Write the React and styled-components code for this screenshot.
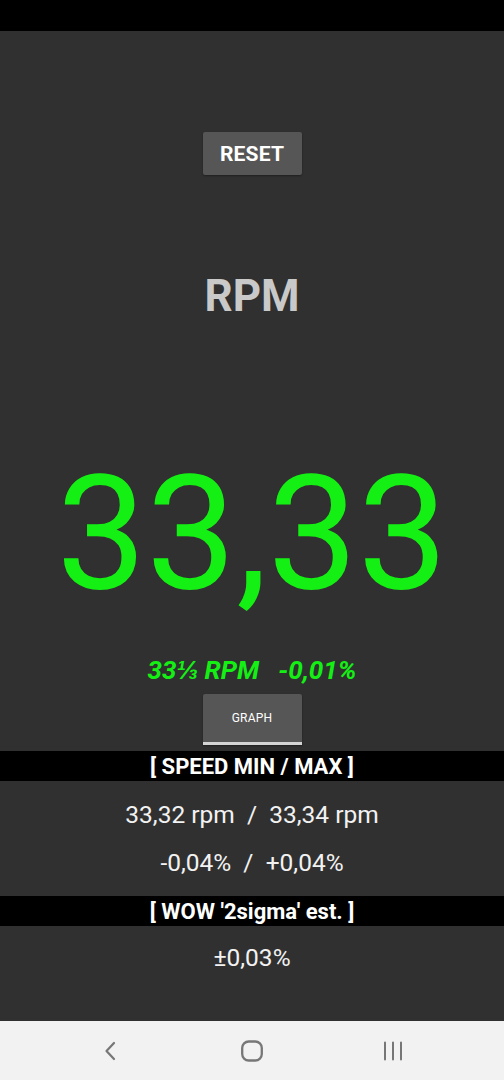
import React from "react";
import styled, { createGlobalStyle } from "styled-components";

const GlobalStyle = createGlobalStyle`
  html, body {
    margin: 0;
    padding: 0;
    background: #303030;
  }
  body {
    font-family: Roboto, "Liberation Sans", sans-serif;
  }
`;

const Screen = styled.div`
  width: 504px;
  height: 1080px;
  display: flex;
  flex-direction: column;
  background: #303030;
  overflow: hidden;
`;

const StatusBar = styled.div`
  height: 31px;
  flex: none;
  background: #000;
`;

const Main = styled.div`
  flex: 1;
  display: flex;
  flex-direction: column;
  align-items: center;
`;

const Button = styled.div`
  width: 99px;
  height: ${(p) => p.h}px;
  margin-top: ${(p) => p.top}px;
  display: flex;
  align-items: center;
  justify-content: center;
  background: #565656;
  color: #fff;
  box-shadow: 0 1px 2px rgba(0, 0, 0, 0.35);
  font-size: ${(p) => p.size}px;
  font-weight: ${(p) => p.weight};
  letter-spacing: 0.2px;
  border-bottom: ${(p) => (p.underline ? "3px solid #d4d4d4" : "none")};
  border-radius: ${(p) => (p.underline ? "2px 2px 0 0" : "2px")};
`;

const Label = styled.div`
  margin-top: 98px;
  font-size: 44px;
  line-height: 46px;
  font-weight: 700;
  color: #c9c9c9;
`;

const BigValue = styled.div`
  margin-top: 135px;
  font-size: 160px;
  line-height: 160px;
  color: #14f014;
`;

const Nominal = styled.div`
  margin-top: 44px;
  font-size: 26px;
  line-height: 24px;
  font-weight: 700;
  font-style: italic;
  color: #14f014;
  white-space: pre;
`;

const Band = styled.div`
  align-self: stretch;
  height: 30px;
  margin-top: ${(p) => p.top || 0}px;
  background: #000;
  color: #fff;
  text-align: center;
  font-size: 22px;
  line-height: 31px;
  font-weight: 700;
  white-space: pre;
`;

const Section = styled.div`
  align-self: stretch;
  padding: ${(p) => p.pad}px 0 ${(p) => p.bottom}px;
  display: flex;
  flex-direction: column;
  align-items: center;
`;

const Row = styled.div`
  font-size: 24.5px;
  line-height: 48px;
  color: #f2f2f2;
  white-space: pre;
`;

const NavBar = styled.div`
  height: 59px;
  flex: none;
  background: #f2f2f2;
  display: flex;
  align-items: center;
  justify-content: space-between;
  padding: 0 91px 0 90px;
`;

const NavIcon = styled.div`
  width: 40px;
  height: 24px;
  display: flex;
  align-items: center;
  justify-content: center;
`;

const BackIcon = () => (
  <svg width="14" height="20" viewBox="0 0 14 20">
    <path d="M11 2 L3.5 10 L11 18" fill="none" stroke="#777" strokeWidth="2.2" strokeLinecap="round" strokeLinejoin="round" />
  </svg>
);

const HomeIcon = () => (
  <svg width="24" height="24" viewBox="0 0 24 24">
    <rect x="2.2" y="2.5" width="19.6" height="19" rx="6.5" fill="none" stroke="#777" strokeWidth="2.3" />
  </svg>
);

const RecentsIcon = () => (
  <svg width="22" height="20" viewBox="0 0 22 20">
    <path d="M3 1.5 V18.5 M11 1.5 V18.5 M19 1.5 V18.5" stroke="#777" strokeWidth="2" strokeLinecap="round" />
  </svg>
);

export default function App() {
  return (
    <Screen>
      <GlobalStyle />
      <StatusBar />
      <Main>
        <Button top={101} h={43} size={21} weight={700}>
          RESET
        </Button>
        <Label>RPM</Label>
        <BigValue>33,33</BigValue>
        <Nominal>{"33⅓ RPM   -0,01%"}</Nominal>
        <Button top={12} h={48} size={12} weight={400} underline>
          GRAPH
        </Button>
        <Band top={6}>{"[ SPEED MIN / MAX ]"}</Band>
        <Section pad={10} bottom={9}>
          <Row>{"33,32 rpm  /  33,34 rpm"}</Row>
          <Row>{"-0,04%  /  +0,04%"}</Row>
        </Section>
        <Band>{"[ WOW '2sigma' est. ]"}</Band>
        <Section pad={8} bottom={0}>
          <Row>±0,03%</Row>
        </Section>
      </Main>
      <NavBar>
        <NavIcon>
          <BackIcon />
        </NavIcon>
        <NavIcon>
          <HomeIcon />
        </NavIcon>
        <NavIcon>
          <RecentsIcon />
        </NavIcon>
      </NavBar>
    </Screen>
  );
}
